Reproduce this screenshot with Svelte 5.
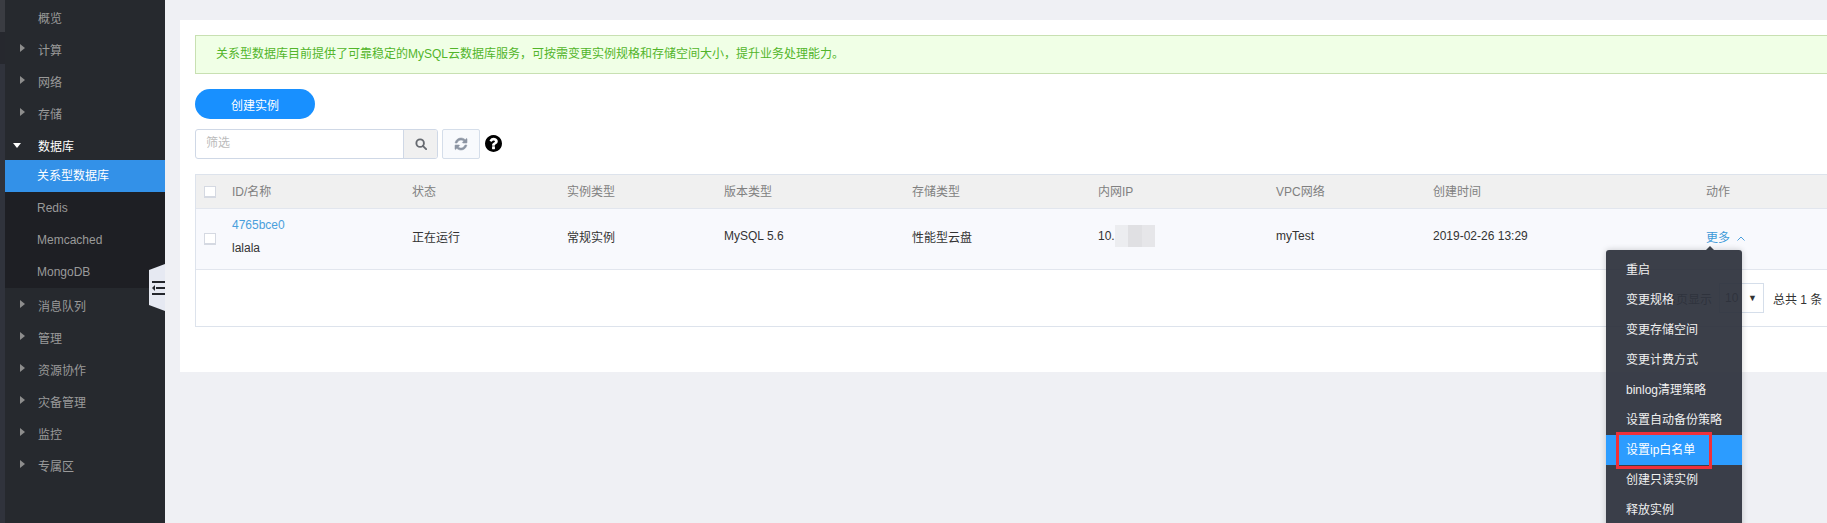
<script>
  const menu = [
    { name: "概览", plain: true },
    { name: "计算" },
    { name: "网络" },
    { name: "存储" },
    { name: "数据库", open: true, subs: ["关系型数据库", "Redis", "Memcached", "MongoDB"] },
    { name: "消息队列" },
    { name: "管理" },
    { name: "资源协作" },
    { name: "灾备管理" },
    { name: "监控" },
    { name: "专属区" },
  ];
  const heads = ["ID/名称", "状态", "实例类型", "版本类型", "存储类型", "内网IP", "VPC网络", "创建时间", "动作"];
  const actions = ["重启", "变更规格", "变更存储空间", "变更计费方式", "binlog清理策略", "设置自动备份策略", "设置ip白名单", "创建只读实例", "释放实例"];
</script>

<div class="page">
  <aside class="sidebar">
    {#each menu as item}
      <div class="item" class:open={item.open}>
        {#if !item.plain}<i class="caret"></i>{/if}
        <span>{item.name}</span>
      </div>
      {#if item.subs}
        <div class="subs">
          {#each item.subs as sub, i}
            <div class="sub" class:active={i === 0}>{sub}</div>
          {/each}
        </div>
      {/if}
    {/each}
    <div class="toggle">
      <svg width="16" height="48" viewBox="0 0 16 48">
        <path d="M16 0 L0 6 V41 L16 47 Z" fill="#e6e9f2" />
        <path d="M3 18 H16 M7 24 H16 M3 30 H16" stroke="#23262c" stroke-width="2" />
        <path d="M6 21 L3 24 L6 27 Z" fill="#23262c" />
      </svg>
    </div>
  </aside>

  <main class="main">
    <section class="panel">
      <div class="alert">关系型数据库目前提供了可靠稳定的MySQL云数据库服务，可按需变更实例规格和存储空间大小，提升业务处理能力。</div>
      <button class="create">创建实例</button>
      <div class="tools">
        <div class="search">
          <span class="placeholder">筛选</span>
          <span class="search-btn">
            <svg width="12" height="12" viewBox="0 0 14 14" fill="none" stroke="#666a70" stroke-width="2.2">
              <circle cx="6" cy="6" r="4.4" />
              <path d="M9.4 9.4 L13 13" stroke-linecap="round" />
            </svg>
          </span>
        </div>
        <button class="refresh">
          <svg width="14" height="14" viewBox="0 0 1792 1792" fill="#8c95a3" stroke="#8c95a3" stroke-width="70"><path d="M1639 1056q0 5-1 7-64 268-268 434.5t-478 166.5q-146 0-282.5-55t-243.5-157l-129 129q-19 19-45 19t-45-19-19-45v-448q0-26 19-45t45-19h448q26 0 45 19t19 45-19 45l-137 137q71 66 161 102t187 36q134 0 250-65t186-179q11-17 53-117 8-23 30-23h192q13 0 22.5 9.5t9.5 22.5zm25-800v448q0 26-19 45t-45 19h-448q-26 0-45-19t-19-45 19-45l138-138q-148-137-349-137-134 0-250 65t-186 179q-11 17-53 117-8 23-30 23h-199q-13 0-22.5-9.5t-9.5-22.5v-7q65-268 270-434.5t480-166.5q146 0 284 55.5t245 156.5l130-129q19-19 45-19t45 19 19 45z"/></svg>
        </button>
        <svg class="help" width="17" height="17" viewBox="128 128 1536 1536" fill="#000"><path d="M1024 1376v-192q0-14-9-23t-23-9h-192q-14 0-23 9t-9 23v192q0 14 9 23t23 9h192q14 0 23-9t9-23zm256-672q0-88-55.5-163t-138.5-116-170-41q-243 0-371 213-15 24 8 42l132 100q7 6 19 6 16 0 25-12 53-68 86-92 34-24 86-24 48 0 85.5 26t37.5 59q0 38-20 61t-68 45q-63 28-115.5 86.5t-52.5 125.5v36q0 14 9 23t23 9h192q14 0 23-9t9-23q0-19 21.5-49.5t54.5-49.5q32-18 49-28.5t46-35 44.5-48 28-60.5 12.5-81zm384 192q0 209-103 385.5t-279.5 279.5-385.5 103-385.5-103-279.5-279.5-103-385.5 103-385.5 279.5-279.5 385.5-103 385.5 103 279.5 279.5 103 385.5z"/></svg>
      </div>

      <div class="table">
        <div class="row head">
          <span class="cell check"><i class="box"></i></span>
          {#each heads as h}
            <span class="cell">{h}</span>
          {/each}
        </div>
        <div class="row body">
          <span class="cell check"><i class="box"></i></span>
          <span class="cell name">
            <a href="#top">4765bce0</a>
            <span>lalala</span>
          </span>
          <span class="cell">正在运行</span>
          <span class="cell">常规实例</span>
          <span class="cell">MySQL 5.6</span>
          <span class="cell">性能型云盘</span>
          <span class="cell ip">10.. <i class="mosaic"><b></b><b></b><b></b></i></span>
          <span class="cell">myTest</span>
          <span class="cell">2019-02-26 13:29</span>
          <span class="cell more">
            <span>更多</span>
            <svg width="8" height="5" viewBox="0 0 8 5" fill="none" stroke="#4a9fdc"><path d="M0.5 4.5 L4 1 L7.5 4.5" /></svg>
            <div class="dropdown">
              <i class="arrow"></i>
              {#each actions as a, i}
                <div class="action" class:hover={i === 6}>{a}</div>
              {/each}
              <i class="mark"></i>
            </div>
          </span>
        </div>
        <div class="pager">
          <span class="muted">每页显示</span>
          <span class="select">10<i class="down">▼</i></span>
          <span class="total">总共 1 条</span>
        </div>
      </div>
    </section>
  </main>
</div>

<style>
  :global(body) {
    margin: 0;
    overflow: hidden;
  }

  .page {
    display: flex;
    width: 1827px;
    height: 523px;
    overflow: hidden;
    background: #eff0f4;
    font-family: "Liberation Sans", "Noto Sans CJK SC", sans-serif;
    font-size: 12px;
    color: #333;
  }

  .sidebar {
    position: relative;
    box-sizing: border-box;
    flex: 0 0 165px;
    padding: 3px 0 0 5px;
    background:
      linear-gradient(to bottom, #3a3c42 32px, #26282e 32px, #26282e 64px, #30333c 64px) 0 0 / 5px 100% no-repeat,
      #26292e;
    color: #9a9a9a;
    font-size: 12px;
  }

  .item {
    position: relative;
    height: 32px;
    line-height: 32px;
    padding-left: 33px;
  }

  .item.open {
    height: 29px;
    color: #fff;
  }

  .caret {
    position: absolute;
    left: 15px;
    top: 9px;
    border-left: 5px solid #8d8d8d;
    border-top: 4px solid transparent;
    border-bottom: 4px solid transparent;
  }

  .open .caret {
    left: 8px;
    top: 12px;
    border-top: 5px solid #fff;
    border-left: 4px solid transparent;
    border-right: 4px solid transparent;
    border-bottom: 0;
  }

  .subs {
    margin-bottom: 3px;
    background: #1e1f24;
  }

  .sub {
    height: 32px;
    line-height: 32px;
    padding-left: 32px;
  }

  .sub.active {
    background: #3391e8;
    color: #fff;
  }

  .toggle {
    position: absolute;
    right: 0;
    top: 264px;
    height: 48px;
    line-height: 0;
  }

  .main {
    flex: 1;
    min-width: 0;
    padding: 20px 0 0 15px;
  }

  .panel {
    width: 1700px;
    height: 352px;
    box-sizing: border-box;
    padding: 15px;
    background: #fff;
  }

  .alert {
    box-sizing: border-box;
    height: 39px;
    line-height: 37px;
    padding-left: 20px;
    background: #f0ffe6;
    border: 1px solid #c8e0b2;
    color: #52b52a;
  }

  .create {
    display: block;
    width: 120px;
    height: 30px;
    margin-top: 15px;
    padding: 0;
    border: 0;
    border-radius: 15px;
    background: #1890ff;
    color: #fff;
    font: inherit;
  }

  .tools {
    display: flex;
    align-items: center;
    margin-top: 10px;
    height: 30px;
  }

  .search {
    display: flex;
    box-sizing: border-box;
    width: 243px;
    height: 30px;
    border: 1px solid #cfd8e6;
    border-radius: 3px;
  }

  .placeholder {
    flex: 1;
    padding-left: 10px;
    line-height: 26px;
    color: #bbb;
  }

  .search-btn {
    display: flex;
    align-items: center;
    justify-content: center;
    width: 33px;
    background: #f0f0f0;
    border-left: 1px solid #cfd8e6;
    border-radius: 0 2px 2px 0;
  }

  .refresh {
    display: flex;
    align-items: center;
    justify-content: center;
    box-sizing: border-box;
    width: 38px;
    height: 30px;
    margin-left: 4px;
    padding: 0;
    border: 1px solid #d5deea;
    border-radius: 2px;
    background: #f8fafd;
  }

  .help {
    margin: 0 0 2px 5px;
  }

  .table {
    margin-top: 15px;
    border-left: 1px solid #dde3ec;
  }

  .row {
    display: grid;
    grid-template-columns: 36px 180px 155px 157px 188px 186px 178px 157px 273px 1fr;
    align-items: center;
    border-bottom: 1px solid #e2e6ee;
  }

  .head {
    height: 35px;
    box-sizing: border-box;
    padding-bottom: 2px;
    border-top: 1px solid #dde3ec;
    background: #f0f0f0;
    color: #808080;
  }

  .body {
    height: 61px;
    box-sizing: border-box;
    padding-bottom: 6px;
    background: #f8f9fd;
  }

  .check {
    padding-left: 8px;
    line-height: 0;
  }

  .head .check {
    padding-top: 2px;
  }

  .body .check {
    padding-top: 5px;
  }

  .box {
    display: inline-block;
    box-sizing: border-box;
    width: 12px;
    height: 12px;
    background: #fff;
    border: 1px solid #d5d9e2;
    border-bottom-width: 2px;
  }

  .name {
    display: flex;
    flex-direction: column;
    gap: 9px;
  }

  a {
    color: #4a9fdc;
    text-decoration: none;
  }

  .ip {
    position: relative;
  }

  .mosaic {
    position: absolute;
    left: 17px;
    top: -4px;
    display: flex;
    width: 40px;
    height: 22px;
  }

  .mosaic b {
    flex: 1;
    background: #e0e0e3;
  }

  .mosaic b:first-child {
    background: #ecedf0;
  }

  .mosaic b:last-child {
    background: #e6e6e9;
  }

  .more {
    position: relative;
    color: #3d9ad8;
  }

  .more svg {
    margin-left: 4px;
    vertical-align: 1px;
  }

  .dropdown {
    position: absolute;
    z-index: 2;
    left: -100px;
    top: 22px;
    box-sizing: border-box;
    width: 136px;
    height: 300px;
    padding-top: 5px;
    background: rgba(42, 47, 57, 0.92);
    border-radius: 3px 3px 0 0;
    box-shadow: 0 0 6px rgba(0, 0, 0, 0.2);
  }

  .arrow {
    position: absolute;
    left: 100px;
    top: -4px;
    border-bottom: 4px solid #3b4049;
    border-left: 4px solid transparent;
    border-right: 4px solid transparent;
  }

  .action {
    height: 30px;
    line-height: 30px;
    padding-left: 20px;
    color: #f0f0f0;
  }

  .action.hover {
    background: #2c9cff;
    color: #fff;
  }

  .mark {
    position: absolute;
    left: 10px;
    top: 182px;
    box-sizing: border-box;
    width: 96px;
    height: 37px;
    border: 3px solid #f0303a;
  }

  .pager {
    display: flex;
    align-items: center;
    box-sizing: border-box;
    height: 57px;
    padding-left: 1468px;
    border-bottom: 1px solid #dde3ec;
  }

  .muted {
    color: #666;
  }

  .select {
    position: relative;
    box-sizing: border-box;
    width: 45px;
    height: 30px;
    margin-left: 7px;
    padding-left: 5px;
    line-height: 28px;
    border: 1px solid #d5deea;
    color: #666;
  }

  .down {
    position: absolute;
    right: 6px;
    font-style: normal;
    font-size: 9px;
    color: #333;
  }

  .total {
    margin-left: 9px;
    white-space: nowrap;
  }
</style>
